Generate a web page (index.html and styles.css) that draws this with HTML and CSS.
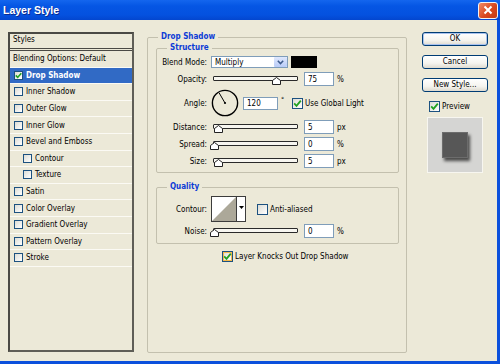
FILE: index.html
```html
<!DOCTYPE html>
<html lang="en">
<head>
    <meta charset="UTF-8">
    <meta name="viewport" content="width=device-width, initial-scale=1.0">
    <title>Layer Style</title>
    <link rel="stylesheet" href="styles.css">
</head>
<body>
    <div class="window">
        <div class="titlebar">
            <span class="title">Layer Style</span>
            <span class="close">
                <svg width="10" height="10" viewBox="0 0 10 10"><path d="M1.5 1.5 L8.5 8.5 M8.5 1.5 L1.5 8.5" stroke="#fff" stroke-width="2" fill="none"/></svg>
            </span>
        </div>

        <div class="dialog">
            <!-- Left: list of effects -->
            <div class="styles-list">
                <div class="list-head">Styles</div>
                <div class="list-item blend">Blending Options: Default</div>
                <div class="list-item selected"><span class="box"><svg width="7" height="7" viewBox="0 0 7 7"><path d="M0.8 3.4 L2.7 5.4 L6.3 1.2" stroke="#21a121" stroke-width="1.6" fill="none"/></svg></span>Drop Shadow</div>
                <div class="list-item"><span class="box"></span>Inner Shadow</div>
                <div class="list-item"><span class="box"></span>Outer Glow</div>
                <div class="list-item"><span class="box"></span>Inner Glow</div>
                <div class="list-item"><span class="box"></span>Bevel and Emboss</div>
                <div class="list-item sub"><span class="box"></span>Contour</div>
                <div class="list-item sub"><span class="box"></span>Texture</div>
                <div class="list-item"><span class="box"></span>Satin</div>
                <div class="list-item"><span class="box"></span>Color Overlay</div>
                <div class="list-item"><span class="box"></span>Gradient Overlay</div>
                <div class="list-item"><span class="box"></span>Pattern Overlay</div>
                <div class="list-item"><span class="box"></span>Stroke</div>
            </div>

            <!-- Middle: Drop Shadow settings -->
            <div class="group main-group">
                <span class="group-title">Drop Shadow</span>

                <div class="group structure">
                    <span class="group-title">Structure</span>

                    <div class="row">
                        <span class="label">Blend Mode:</span>
                        <div class="select">
                            <span>Multiply</span>
                            <span class="select-btn"><svg width="7" height="5" viewBox="0 0 7 5"><path d="M0.8 0.8 L3.5 3.6 L6.2 0.8" stroke="#3d5a8c" stroke-width="1.5" fill="none"/></svg></span>
                        </div>
                        <span class="swatch"></span>
                    </div>

                    <div class="row">
                        <span class="label">Opacity:</span>
                        <div class="slider">
                            <span class="track"></span>
                            <span class="range"><svg class="thumb" style="left: 75%" width="9" height="8" viewBox="0 0 9 8"><path d="M0.5 3.5 L4.5 0.5 L8.5 3.5 L8.5 7.5 L0.5 7.5 Z" fill="#fff" stroke="#222"/></svg></span>
                        </div>
                        <span class="field">75</span>
                        <span class="unit">%</span>
                    </div>

                    <div class="row angle">
                        <span class="label">Angle:</span>
                        <svg class="dial" width="28" height="28" viewBox="0 0 28 28">
                            <circle cx="14" cy="14" r="12.6" fill="none" stroke="#000" stroke-width="1.4"/>
                            <path d="M14 14 L8.2 4" stroke="#000" stroke-width="1"/>
                            <circle cx="14" cy="14" r="1.1" fill="#000"/>
                        </svg>
                        <span class="field angle-field">120</span>
                        <span class="deg">°</span>
                        <span class="box big"><svg width="9" height="9" viewBox="0 0 9 9"><path d="M1.2 4.4 L3.5 6.8 L7.8 1.6" stroke="#21a121" stroke-width="1.8" fill="none"/></svg></span>
                        <span>Use Global Light</span>
                    </div>

                    <div class="row">
                        <span class="label">Distance:</span>
                        <div class="slider">
                            <span class="track"></span>
                            <span class="range"><svg class="thumb" style="left: 4.5%" width="9" height="8" viewBox="0 0 9 8"><path d="M0.5 3.5 L4.5 0.5 L8.5 3.5 L8.5 7.5 L0.5 7.5 Z" fill="#fff" stroke="#222"/></svg></span>
                        </div>
                        <span class="field">5</span>
                        <span class="unit">px</span>
                    </div>

                    <div class="row">
                        <span class="label">Spread:</span>
                        <div class="slider">
                            <span class="track"></span>
                            <span class="range"><svg class="thumb" style="left: 0%" width="9" height="8" viewBox="0 0 9 8"><path d="M0.5 3.5 L4.5 0.5 L8.5 3.5 L8.5 7.5 L0.5 7.5 Z" fill="#fff" stroke="#222"/></svg></span>
                        </div>
                        <span class="field">0</span>
                        <span class="unit">%</span>
                    </div>

                    <div class="row">
                        <span class="label">Size:</span>
                        <div class="slider">
                            <span class="track"></span>
                            <span class="range"><svg class="thumb" style="left: 4.5%" width="9" height="8" viewBox="0 0 9 8"><path d="M0.5 3.5 L4.5 0.5 L8.5 3.5 L8.5 7.5 L0.5 7.5 Z" fill="#fff" stroke="#222"/></svg></span>
                        </div>
                        <span class="field">5</span>
                        <span class="unit">px</span>
                    </div>
                </div>

                <div class="group quality">
                    <span class="group-title">Quality</span>

                    <div class="row contour">
                        <span class="label">Contour:</span>
                        <div class="contour-pick">
                            <svg width="24" height="24" viewBox="0 0 24 24"><path d="M0 24 L24 0 L24 24 Z" fill="#aca899"/></svg>
                            <span class="contour-arrow"><svg width="5" height="3" viewBox="0 0 5 3"><path d="M0 0 L5 0 L2.5 3 Z" fill="#000"/></svg></span>
                        </div>
                        <span class="anti"><span class="box big"></span>Anti-aliased</span>
                    </div>

                    <div class="row">
                        <span class="label">Noise:</span>
                        <div class="slider">
                            <span class="track"></span>
                            <span class="range"><svg class="thumb" style="left: 0%" width="9" height="8" viewBox="0 0 9 8"><path d="M0.5 3.5 L4.5 0.5 L8.5 3.5 L8.5 7.5 L0.5 7.5 Z" fill="#fff" stroke="#222"/></svg></span>
                        </div>
                        <span class="field">0</span>
                        <span class="unit">%</span>
                    </div>
                </div>

                <div class="knockout">
                    <span class="box big hot"><svg width="9" height="9" viewBox="0 0 9 9"><path d="M1.2 4.4 L3.5 6.8 L7.8 1.6" stroke="#21a121" stroke-width="1.8" fill="none"/></svg></span>
                    <span>Layer Knocks Out Drop Shadow</span>
                </div>
            </div>

            <!-- Right: buttons and preview -->
            <div class="side">
                <span class="btn default">OK</span>
                <span class="btn">Cancel</span>
                <span class="btn">New Style...</span>
                <div class="preview-check">
                    <span class="box big"><svg width="9" height="9" viewBox="0 0 9 9"><path d="M1.2 4.4 L3.5 6.8 L7.8 1.6" stroke="#21a121" stroke-width="1.8" fill="none"/></svg></span>
                    <span>Preview</span>
                </div>
                <div class="preview-box">
                    <div class="preview-shape"></div>
                </div>
            </div>
        </div>
    </div>
</body>
</html>
```

FILE: styles.css
```css
* {
    margin: 0;
    padding: 0;
    box-sizing: border-box;
}

body {
    font-family: "DejaVu Sans Condensed", "DejaVu Sans", sans-serif;
    font-size: 8px;
    color: #000;
    background-color: #ece9d8;
}

.window {
    width: 500px;
    height: 364px;
    display: flex;
    flex-direction: column;
    background-color: #ece9d8;
}

/* Title bar */
.titlebar {
    height: 20px;
    flex-shrink: 0;
    display: flex;
    align-items: center;
    justify-content: space-between;
    padding: 0 2px 0 3px;
    background: linear-gradient(#1466ee 0%, #0556e4 30%, #0451df 75%, #0346cf 100%);
}

.title {
    color: #fff;
    font-family: "Liberation Sans", sans-serif;
    font-weight: bold;
    font-size: 10.5px;
    text-shadow: 1px 1px 0 #0b2a8e;
}

.close {
    width: 20px;
    height: 17px;
    display: flex;
    align-items: center;
    justify-content: center;
    border: 1px solid #f2f2f2;
    border-radius: 3px;
    background: linear-gradient(135deg, #f08a66, #d9481f 55%, #c33b14);
}

/* Dialog body */
.dialog {
    flex: 1;
    display: flex;
    align-items: flex-start;
    padding: 12px 0 0 8px;
    border-right: 3px solid #0b50dc;
    border-bottom: 3px solid #0b50dc;
}

/* Styles list */
.styles-list {
    width: 126px;
    height: 320px;
    flex-shrink: 0;
    border: 2px solid #5f5e57;
    border-top-color: #4a4944;
    border-left-color: #4a4944;
}

.list-head {
    height: 17px;
    line-height: 12px;
    padding: 0 3px 2px;
    border-bottom: 3px double #4a4944;
}

.list-item {
    height: 16.6px;
    display: flex;
    align-items: center;
    padding-left: 4px;
    border-bottom: 1px solid #fbfaf4;
    white-space: nowrap;
}

.list-item.blend {
    padding-left: 3px;
}

.list-item.sub {
    padding-left: 13px;
}

.list-item.selected {
    background-color: #316ac5;
    color: #fff;
    font-weight: bold;
}

/* Check boxes */
.box {
    width: 9px;
    height: 9px;
    flex-shrink: 0;
    display: flex;
    align-items: center;
    justify-content: center;
    margin-right: 3px;
    border: 1px solid #1c5180;
    background: linear-gradient(135deg, #dcdcd5, #fff);
}

.box.big {
    width: 11px;
    height: 11px;
    margin-right: 2px;
}

.box.hot {
    box-shadow: inset 0 0 0 1px #f6b94a;
}

/* Group boxes */
.group {
    position: relative;
    border: 1px solid #c3c0ae;
    border-radius: 2px;
}

.group-title {
    position: absolute;
    top: -7px;
    left: 10px;
    padding: 0 3px;
    line-height: 12px;
    background-color: #ece9d8;
    color: #0c3cd6;
    font-weight: bold;
    white-space: nowrap;
}

.main-group {
    width: 260px;
    height: 316px;
    flex-shrink: 0;
    margin: 5px 0 0 13px;
    padding: 10px 7px 0 8px;
}

.structure {
    height: 125px;
    padding-top: 5px;
    display: flex;
    flex-direction: column;
    gap: 1px;
}

.quality {
    height: 57px;
    margin-top: 14px;
    padding-top: 8px;
    display: flex;
    flex-direction: column;
    gap: 1px;
}

.row {
    height: 16px;
    display: flex;
    align-items: center;
    white-space: nowrap;
}

.row.angle {
    height: 30px;
}

.row.contour {
    height: 26px;
}

.label {
    width: 50px;
    flex-shrink: 0;
    margin-right: 4px;
    text-align: right;
}

/* Controls */
.select {
    width: 77px;
    height: 12px;
    display: flex;
    align-items: center;
    justify-content: space-between;
    padding-left: 3px;
    border: 1px solid #7f9db9;
    background-color: #fff;
}

.select-btn {
    width: 13px;
    height: 10px;
    display: flex;
    align-items: center;
    justify-content: center;
    border-radius: 1px;
    background: linear-gradient(#dfe8fd, #b9cbf7);
}

.swatch {
    width: 26px;
    height: 12px;
    margin-left: 3px;
    background-color: #000;
}

.slider {
    position: relative;
    width: 85px;
    height: 16px;
    margin-left: 2px;
}

.track {
    position: absolute;
    left: 0;
    right: 0;
    top: 5px;
    height: 5px;
    border: 1px solid #2a2a2a;
    border-radius: 1px;
    background-color: #f7f6f0;
}

.range {
    position: absolute;
    left: 1px;
    right: 1px;
    top: 6px;
    height: 8px;
}

.thumb {
    position: absolute;
    top: 0;
    margin-left: -4px;
}

.field {
    width: 30px;
    height: 14px;
    display: flex;
    align-items: center;
    margin-left: 6px;
    padding-left: 3px;
    border: 1px solid #7f9db9;
    background-color: #fff;
}

.unit {
    margin-left: 3px;
}

.dial {
    flex-shrink: 0;
}

.field.angle-field {
    width: 35px;
    height: 13px;
    margin-left: 4px;
}

.deg {
    width: 14px;
    padding-left: 3px;
    align-self: flex-start;
    margin-top: 8px;
    font-size: 7px;
}

.contour-pick {
    width: 35px;
    height: 26px;
    display: flex;
    border: 1px solid #3c3c3c;
    background-color: #fff;
}

.contour-arrow {
    flex: 1;
    display: flex;
    align-items: center;
    justify-content: center;
    border-left: 1px solid #3c3c3c;
    padding-bottom: 3px;
}

.anti {
    display: flex;
    align-items: center;
    margin-left: 11px;
}

.knockout {
    height: 14px;
    display: flex;
    align-items: center;
    margin: 5px 0 0 66px;
    white-space: nowrap;
}

/* Buttons and preview */
.side {
    width: 66px;
    flex-shrink: 0;
    display: flex;
    flex-direction: column;
    margin-left: 15px;
}

.btn {
    height: 14px;
    line-height: 12px;
    text-align: center;
    border: 1px solid #003c74;
    border-radius: 3px;
    background: linear-gradient(#fff, #f5f4ef 60%, #dedacf);
}

.btn + .btn {
    margin-top: 9px;
}

.btn.default {
    box-shadow: inset 0 0 0 1px #a9c2ee;
}

.preview-check {
    height: 13px;
    display: flex;
    align-items: center;
    margin: 8px 0 0 7px;
}

.preview-box {
    width: 56px;
    height: 56px;
    margin: 4px 0 0 5px;
    padding: 14px;
    border: 1px solid #f7f6f0;
    background-color: #d5d5d3;
}

.preview-shape {
    width: 26px;
    height: 26px;
    border: 1px solid #6c6c6c;
    background-color: #575757;
    box-shadow: 2px 3px 3px rgba(0, 0, 0, 0.65);
}
```
